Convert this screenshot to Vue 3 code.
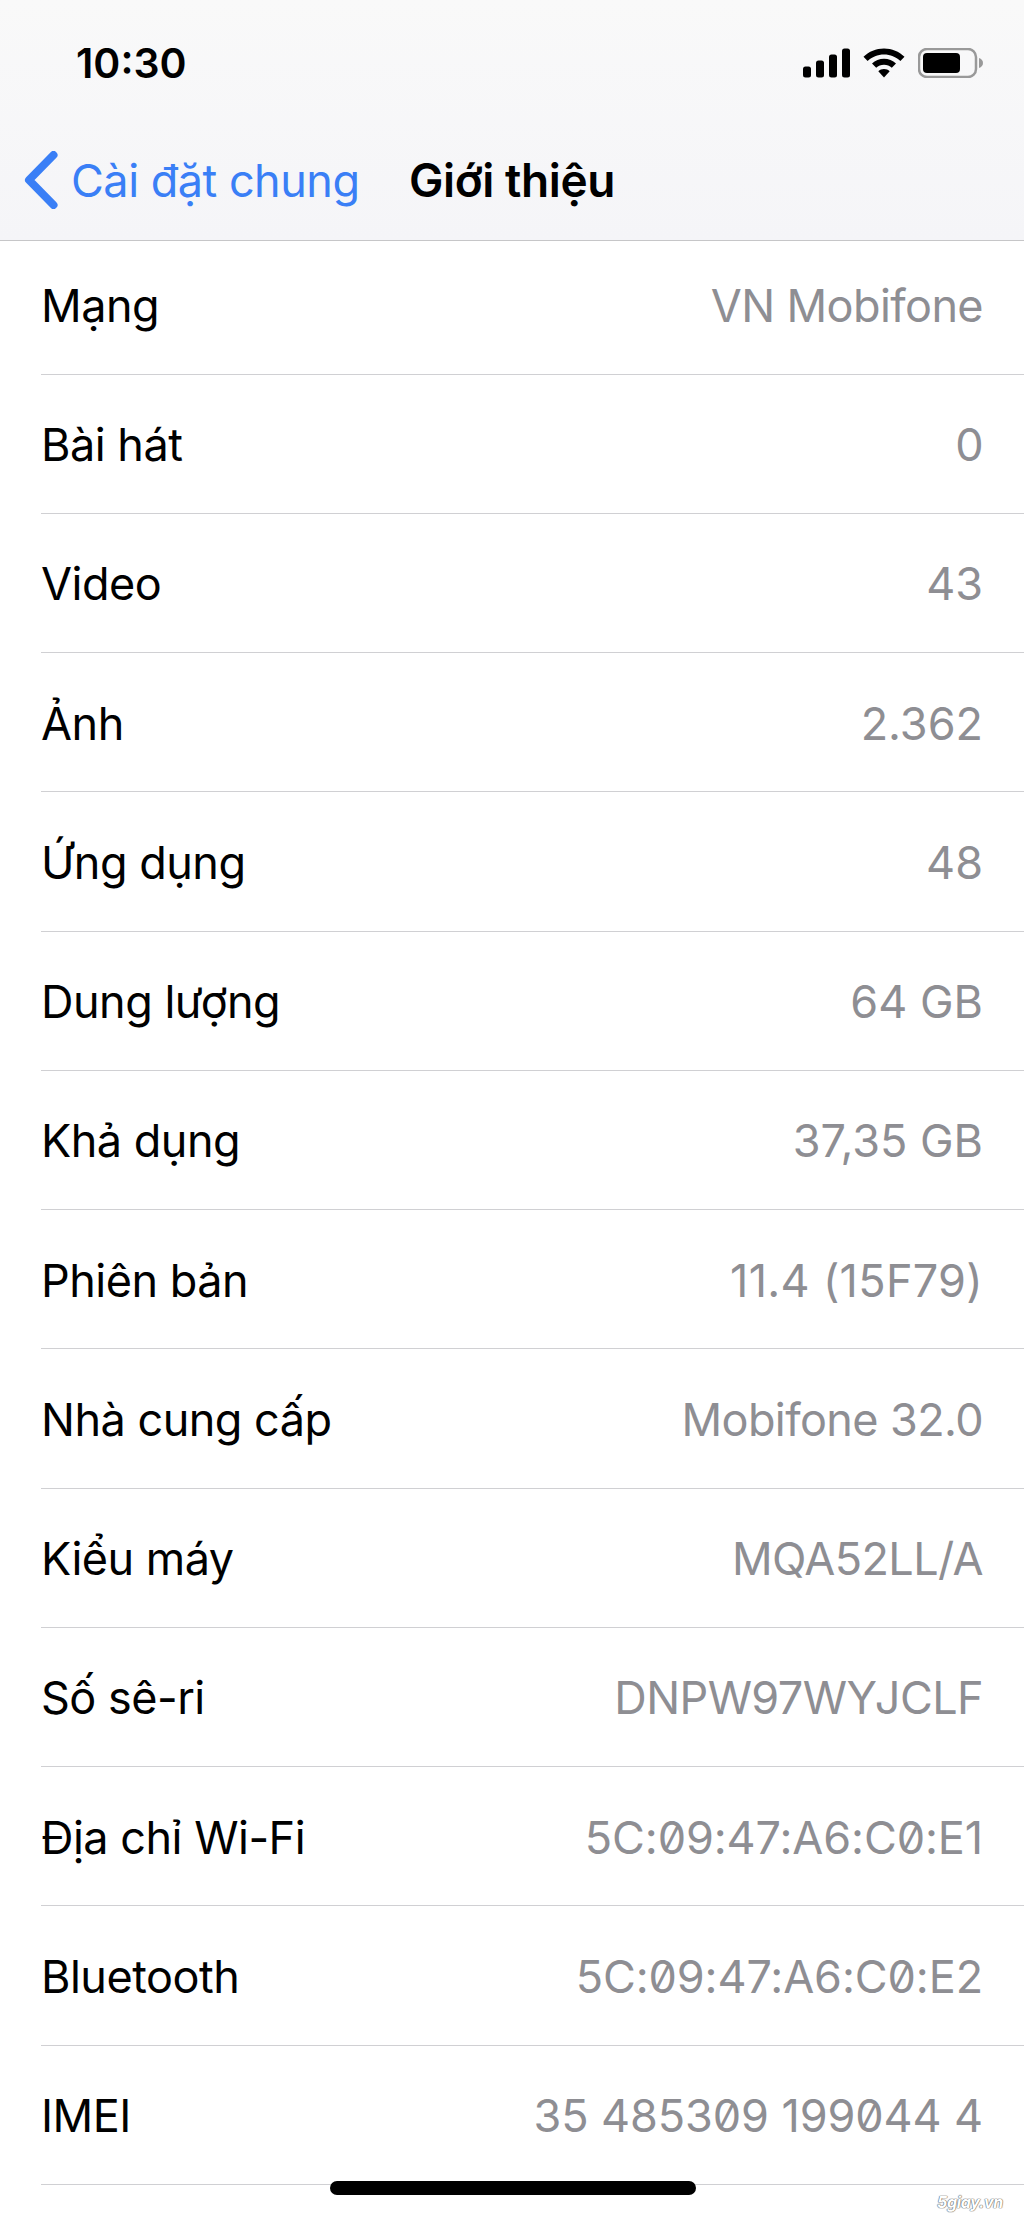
<template>
  <div class="screen">
    <header class="top">
      <div class="status-bar">
        <span class="time">10:30</span>
        <div class="status-icons">
          <svg width="47" height="30" viewBox="0 0 47 30">
            <rect x="0" y="18.5" width="8" height="11" rx="2.5" />
            <rect x="13" y="12.5" width="8" height="17" rx="2.5" />
            <rect x="26" y="6.5" width="8" height="23" rx="2.5" />
            <rect x="39" y="0.5" width="8" height="29" rx="2.5" />
          </svg>
          <svg width="42" height="30" viewBox="0 0 42 30">
            <path d="M21 0.5C13 0.5 6 3.6 0.5 8.7L4.6 13C9 8.9 14.7 6.5 21 6.5s12 2.4 16.4 6.5l4.1-4.3C36 3.6 29 0.5 21 0.5z" />
            <path d="M21 10.8c-4.6 0-8.8 1.8-12 4.7l4.2 4.3c2.1-1.9 4.8-3 7.8-3s5.7 1.1 7.8 3l4.2-4.3c-3.2-2.9-7.4-4.7-12-4.7z" />
            <path d="M21 21c-2.2 0-4.2 0.9-5.7 2.2L21 29.5l5.7-6.3C25.2 21.9 23.2 21 21 21z" />
          </svg>
          <svg width="66" height="30" viewBox="0 0 66 30">
            <rect x="1" y="1" width="57" height="28" rx="8" class="batt-border" />
            <rect x="5" y="5" width="37" height="20" rx="4" />
            <path d="M61 10c2.5 0.8 4 2.7 4 5s-1.5 4.2-4 5z" class="batt-tip" />
          </svg>
        </div>
      </div>
      <nav class="nav-bar">
        <div class="back">
          <svg width="34" height="58" viewBox="0 0 34 58">
            <path d="M29.5 4L5 29l24.5 25" />
          </svg>
          <span>Cài đặt chung</span>
        </div>
        <div class="title">Giới thiệu</div>
      </nav>
    </header>

    <ul class="list">
      <li v-for="row in rows" :key="row.label" class="row">
        <span class="label">{{ row.label }}</span>
        <span class="value" :class="row.kind">{{ row.value }}</span>
      </li>
    </ul>

    <div class="home-bar"></div>
    <div class="watermark">5giay.vn</div>
  </div>
</template>

<script setup>
const rows = [
  { label: 'Mạng', value: 'VN Mobifone' },
  { label: 'Bài hát', value: '0' },
  { label: 'Video', value: '43', kind: 'digits' },
  { label: 'Ảnh', value: '2.362', kind: 'digits' },
  { label: 'Ứng dụng', value: '48', kind: 'digits' },
  { label: 'Dung lượng', value: '64 GB', kind: 'digits' },
  { label: 'Khả dụng', value: '37,35 GB', kind: 'digits' },
  { label: 'Phiên bản', value: '11.4 (15F79)', kind: 'version' },
  { label: 'Nhà cung cấp', value: 'Mobifone 32.0' },
  { label: 'Kiểu máy', value: 'MQA52LL/A' },
  { label: 'Số sê-ri', value: 'DNPW97WYJCLF' },
  { label: 'Địa chỉ Wi-Fi', value: '5C:09:47:A6:C0:E1', kind: 'slashed' },
  { label: 'Bluetooth', value: '5C:09:47:A6:C0:E2', kind: 'slashed' },
  { label: 'IMEI', value: '35 485309 199044 4', kind: 'slashed' }
]
</script>

<style>
html, body { margin: 0; background: #fff; }
</style>

<style scoped>
.screen {
  position: relative;
  width: 1024px;
  height: 2217px;
  overflow: hidden;
  background: #fff;
  font-family: Inter, "Noto Sans", sans-serif;
  color: #000;
}
.top {
  height: 240px;
  background: linear-gradient(#f9f9f9, #f5f5f8);
  border-bottom: 1px solid #c6c6c8;
}
.status-bar {
  height: 125px;
  display: flex;
  align-items: center;
  justify-content: space-between;
  padding: 0 40px 0 76px;
}
.time { font-size: 41px; font-weight: 600; letter-spacing: 0; }
.status-icons { display: flex; align-items: center; gap: 13px; }
.status-icons svg { display: block; fill: #000; }
.batt-border { fill: none; stroke: #999; stroke-width: 2.5; }
.status-icons .batt-tip { fill: #999; }
.nav-bar {
  height: 110px;
  display: grid;
  grid-template-columns: 1fr auto 1fr;
  align-items: center;
}
.back {
  grid-column: 1;
  grid-row: 1;
  display: flex;
  align-items: center;
  gap: 13px;
  padding-left: 24px;
  color: #3a7ff6;
  font-size: 45px;
  letter-spacing: -0.5px;
  white-space: nowrap;
}
.back svg { display: block; fill: none; stroke: #3a7ff6; stroke-width: 8; stroke-linecap: round; stroke-linejoin: round; }
.title { grid-column: 2; font-size: 46px; font-weight: 600; letter-spacing: -0.4px; }
.list { list-style: none; margin: 0; padding: 0 0 0 41px; }
.row {
  height: 139.25px;
  box-sizing: border-box;
  display: flex;
  align-items: center;
  justify-content: space-between;
  padding-top: 2px;
  padding-right: 41px;
  border-bottom: 1.5px solid #d0d0d3;
  font-size: 45px;
  letter-spacing: -0.6px;
}
.row:first-child { height: 133.5px; padding-top: 0; padding-bottom: 3px; }
.label { letter-spacing: -0.5px; }
.value { color: #8e8e93; }
.digits { letter-spacing: 0; }
.version { letter-spacing: 0.3px; }
.slashed { letter-spacing: -0.1px; font-variant-numeric: slashed-zero; }
.home-bar {
  position: absolute;
  left: 330px;
  top: 2181px;
  width: 366px;
  height: 14px;
  border-radius: 7px;
  background: #000;
}
.watermark {
  position: absolute;
  right: 21px;
  top: 2192px;
  font-size: 16px;
  font-style: italic;
  font-weight: 700;
  letter-spacing: -0.3px;
  color: #fff;
  text-shadow: 0 0 1px #666, 0 0 1px #666, 0 0 1px #666;
}
</style>
